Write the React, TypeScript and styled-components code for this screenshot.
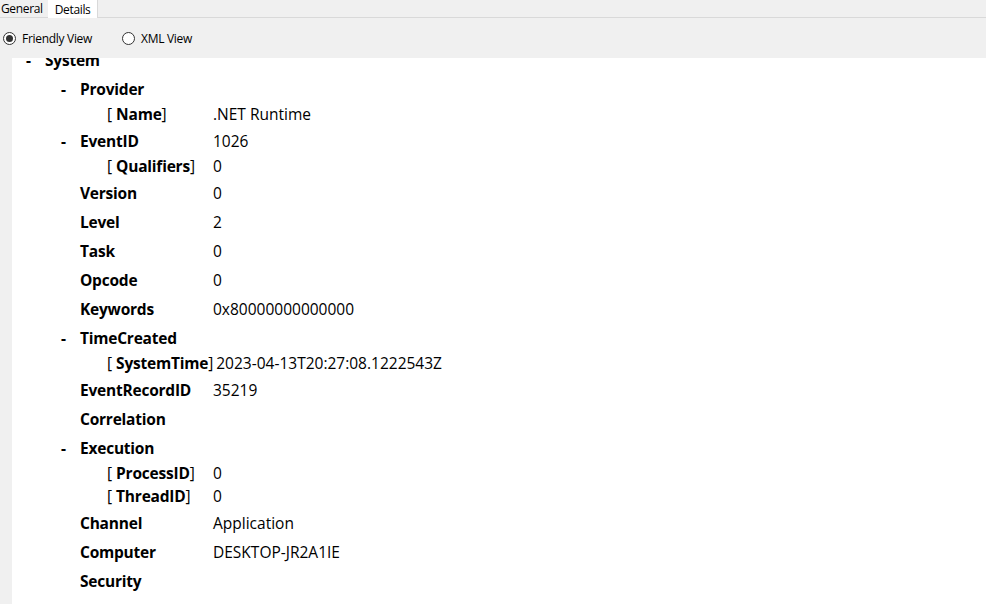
import React from 'react';
import styled, { createGlobalStyle } from 'styled-components';

const GlobalStyle = createGlobalStyle`
  html, body {
    margin: 0;
    padding: 0;
    background: #f0f0f0;
    overflow: hidden;
  }
  body {
    font-family: "Open Sans", "Noto Sans", "Liberation Sans", sans-serif;
    color: #000;
  }
`;

type Attr = { name: string; value?: string };
type Node = { name: string; value?: string; open?: boolean; attrs?: Attr[] };

const systemChildren: Node[] = [
  { name: 'Provider', open: true, attrs: [{ name: 'Name', value: '.NET Runtime' }] },
  { name: 'EventID', value: '1026', open: true, attrs: [{ name: 'Qualifiers', value: '0' }] },
  { name: 'Version', value: '0' },
  { name: 'Level', value: '2' },
  { name: 'Task', value: '0' },
  { name: 'Opcode', value: '0' },
  { name: 'Keywords', value: '0x80000000000000' },
  {
    name: 'TimeCreated',
    open: true,
    attrs: [{ name: 'SystemTime', value: '2023-04-13T20:27:08.1222543Z' }],
  },
  { name: 'EventRecordID', value: '35219' },
  { name: 'Correlation' },
  {
    name: 'Execution',
    open: true,
    attrs: [
      { name: 'ProcessID', value: '0' },
      { name: 'ThreadID', value: '0' },
    ],
  },
  { name: 'Channel', value: 'Application' },
  { name: 'Computer', value: 'DESKTOP-JR2A1IE' },
  { name: 'Security' },
];

const Window = styled.div`
  width: 986px;
  height: 604px;
  display: flex;
  flex-direction: column;
  background: #f0f0f0;
`;

const TabStrip = styled.div`
  display: flex;
  height: 17px;
  border-bottom: 1px solid #d9d9d9;
  font-size: 12px;
  letter-spacing: -0.35px;
`;

const Tab = styled.div<{ $active?: boolean }>`
  display: flex;
  align-items: center;
  padding: 0 ${(p) => (p.$active ? '7px' : '4px')} 0 ${(p) => (p.$active ? '7px' : '1px')};
  height: ${(p) => (p.$active ? '18px' : '17px')};
  background: ${(p) => (p.$active ? '#ffffff' : 'transparent')};
  border-right: 1px solid ${(p) => (p.$active ? '#d9d9d9' : 'transparent')};
  color: #000;
`;

const OptionBar = styled.div`
  display: flex;
  align-items: center;
  height: 40px;
  padding-left: 3px;
  gap: 30px;
  font-size: 12px;
  letter-spacing: -0.3px;
`;

const Radio = styled.label`
  display: flex;
  align-items: center;
  gap: 6px;
`;

const RadioCircle = styled.span<{ $checked?: boolean }>`
  width: 11px;
  height: 11px;
  border: 1px solid #333;
  border-radius: 50%;
  background: #fff;
  display: flex;
  align-items: center;
  justify-content: center;
  &::after {
    content: '';
    width: 7px;
    height: 7px;
    border-radius: 50%;
    background: ${(p) => (p.$checked ? '#333' : 'transparent')};
  }
`;

const Body = styled.div`
  flex: 1;
  display: flex;
  min-height: 0;
`;

const Gutter = styled.div`
  width: 12px;
  background: #f0f0f0;
`;

const Pane = styled.div`
  flex: 1;
  background: #fff;
  overflow: hidden;
`;

const Tree = styled.div`
  margin-top: -12px;
  font-size: 15.5px;
  letter-spacing: 0;
  line-height: 21px;
`;

const ElementRow = styled.div<{ $level: number }>`
  display: flex;
  padding: 4px 0;
  padding-left: ${(p) => 14 + p.$level * 35}px;
`;

const Toggle = styled.span`
  width: 19px;
  flex-shrink: 0;
  font-weight: 700;
`;

const Name = styled.span<{ $min: number }>`
  font-weight: 700;
  letter-spacing: -0.22px;
  min-width: ${(p) => p.$min}px;
  flex-shrink: 0;
  padding-right: 3px;
  box-sizing: border-box;
`;

const Value = styled.span`
  font-weight: 400;
`;

const AttrRow = styled.div`
  display: flex;
  padding: 0 0 2px 95px;
`;

const Bracket = styled.span`
  color: #000;
`;

const AttrName = styled.span`
  min-width: 106px;
  flex-shrink: 0;
  padding-right: 3px;
  box-sizing: border-box;
  b {
    font-weight: 700;
    letter-spacing: -0.22px;
  }
`;

const Element = ({ node, level }: { node: Node; level: number }) => (
  <>
    <ElementRow $level={level}>
      <Toggle>{node.open ? '-' : ''}</Toggle>
      <Name $min={level === 0 ? 170 : 133}>{node.name}</Name>
      {node.value && <Value>{node.value}</Value>}
    </ElementRow>
    {node.attrs?.map((a) => (
      <AttrRow key={a.name}>
        <AttrName>
          <Bracket>[ </Bracket>
          <b>{a.name}</b>
          <Bracket>]</Bracket>
        </AttrName>
        {a.value && <Value>{a.value}</Value>}
      </AttrRow>
    ))}
  </>
);

export default function App() {
  return (
    <>
      <GlobalStyle />
      <Window>
        <TabStrip>
          <Tab>General</Tab>
          <Tab $active>Details</Tab>
        </TabStrip>
        <OptionBar>
          <Radio>
            <RadioCircle $checked />
            Friendly View
          </Radio>
          <Radio>
            <RadioCircle />
            XML View
          </Radio>
        </OptionBar>
        <Body>
          <Gutter />
          <Pane>
            <Tree>
              <Element node={{ name: 'System', open: true }} level={0} />
              {systemChildren.map((n) => (
                <Element key={n.name} node={n} level={1} />
              ))}
            </Tree>
          </Pane>
        </Body>
      </Window>
    </>
  );
}
